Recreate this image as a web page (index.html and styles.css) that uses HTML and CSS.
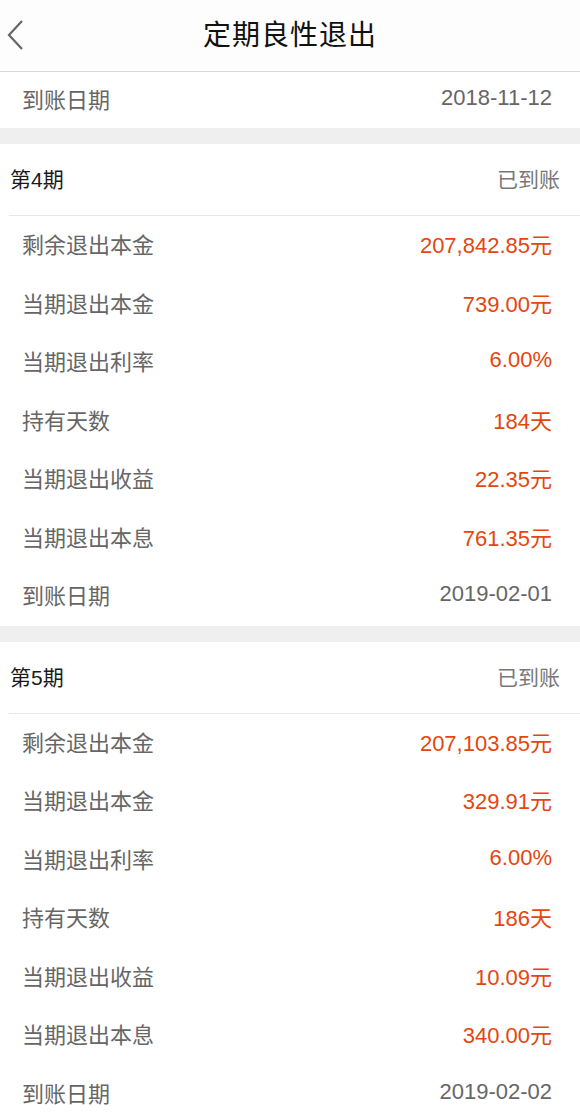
FILE: index.html
```html
<!DOCTYPE html>
<html lang="zh-CN">
  <head>
    <meta charset="UTF-8" />
    <title>定期良性退出</title>
    <link rel="stylesheet" href="styles.css">
  </head>
  <body>
    <header class="topbar">
      <a class="back" href="#">
        <svg width="18" height="32" viewBox="0 0 18 32">
          <path d="M15 2 L2 16 L15 30" fill="none" stroke="#666" stroke-width="2.2" />
        </svg>
      </a>
      <h1>定期良性退出</h1>
    </header>

    <div class="row first">
      <span class="label">到账日期</span>
      <span class="date">2018-11-12</span>
    </div>

    <section class="card">
      <div class="card-head">
        <span class="period">第4期</span>
        <span class="status">已到账</span>
      </div>
      <div class="row"><span class="label">剩余退出本金</span><span class="amount">207,842.85元</span></div>
      <div class="row"><span class="label">当期退出本金</span><span class="amount">739.00元</span></div>
      <div class="row"><span class="label">当期退出利率</span><span class="amount">6.00%</span></div>
      <div class="row"><span class="label">持有天数</span><span class="amount">184天</span></div>
      <div class="row"><span class="label">当期退出收益</span><span class="amount">22.35元</span></div>
      <div class="row"><span class="label">当期退出本息</span><span class="amount">761.35元</span></div>
      <div class="row"><span class="label">到账日期</span><span class="date">2019-02-01</span></div>
    </section>

    <section class="card">
      <div class="card-head">
        <span class="period">第5期</span>
        <span class="status">已到账</span>
      </div>
      <div class="row"><span class="label">剩余退出本金</span><span class="amount">207,103.85元</span></div>
      <div class="row"><span class="label">当期退出本金</span><span class="amount">329.91元</span></div>
      <div class="row"><span class="label">当期退出利率</span><span class="amount">6.00%</span></div>
      <div class="row"><span class="label">持有天数</span><span class="amount">186天</span></div>
      <div class="row"><span class="label">当期退出收益</span><span class="amount">10.09元</span></div>
      <div class="row"><span class="label">当期退出本息</span><span class="amount">340.00元</span></div>
      <div class="row"><span class="label">到账日期</span><span class="date">2019-02-02</span></div>
    </section>
  </body>
</html>
```

FILE: styles.css
```css
body {
  font-family: "Liberation Sans", "Noto Sans CJK SC", sans-serif;
  background: #fff;
  margin: 0;
  padding: 0;
  overflow: hidden;
}

.topbar {
  height: 72px;
  box-sizing: border-box;
  padding-bottom: 5px;
  border-bottom: 1px solid #d9d9d9;
  display: flex;
  align-items: center;
  justify-content: center;
  position: relative;
  background: #fdfdfd;
}

.back {
  position: absolute;
  left: 7px;
  top: 19px;
  display: block;
}

.topbar h1 {
  margin: 0;
  font-size: 28px;
  font-weight: normal;
  color: #111;
  letter-spacing: 1px;
}

.row {
  height: 58.5px;
  box-sizing: border-box;
  padding: 0 28px 4px 22px;
  display: flex;
  align-items: center;
  justify-content: space-between;
  font-size: 22px;
}

.row.first {
  height: 56px;
}

.label {
  color: #666;
}

.amount {
  color: #e5460f;
}

.date {
  color: #666;
}

.card {
  border-top: 16px solid #efefef;
}

.card-head {
  height: 72px;
  box-sizing: border-box;
  padding: 0 20px 3px 0;
  margin-left: 9px;
  border-bottom: 1px solid #e8e8e8;
  display: flex;
  align-items: center;
  justify-content: space-between;
  font-size: 21px;
}

.period {
  color: #1a1a1a;
  margin-left: 1px;
}

.status {
  color: #777;
}
```
